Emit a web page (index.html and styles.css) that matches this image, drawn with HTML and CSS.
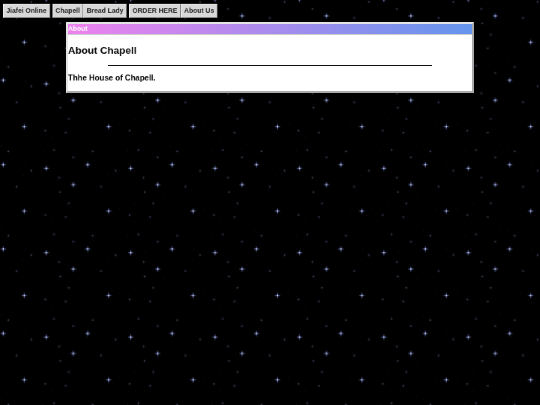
FILE: index.html
```html
<!DOCTYPE html>
<html lang="en">
<head>
<meta charset="utf-8">
<title>About Chapell</title>
<link rel="stylesheet" href="styles.css">
</head>
<body>
<svg class="sky" width="540" height="405" aria-hidden="true">
  <defs>
    <symbol id="big" overflow="visible"><circle class="halo" r="1.8"/><path class="ray" d="M-2.8 0H2.8M0-2.8V2.8"/><circle class="core" r=".8"/></symbol>
    <symbol id="mid" overflow="visible"><path class="ray-dim" d="M-1.4 0H1.4M0-1.4V1.4"/><circle class="core-dim" r=".4"/></symbol>
    <circle id="dot" class="dot" r=".35"/>
    <pattern id="stars" width="84.4" height="84.4" patternUnits="userSpaceOnUse">
      <use href="#big" x="73.3" y="15.9"/><use href="#big" x="24.3" y="42.3"/>
      <use href="#big" x="3.3" y="80.3"/><use href="#big" x="46.3" y="83.9"/>
      <use href="#big" x="46.3" y="-.5"/><use href="#big" x="3.3" y="-4.1"/>
      <use href="#mid" x="16.7" y="17.9"/><use href="#mid" x="60.3" y="23.3"/>
      <use href="#mid" x="68.7" y="34.6"/><use href="#mid" x="45.3" y="46.3"/>
      <use href="#mid" x="65.7" y="48.3"/><use href="#mid" x="8.3" y="66.9"/>
      <use href="#mid" x="54" y="65.6"/><use href="#mid" x="73.3" y="72.9"/>
      <use href="#mid" x="31.3" y="1.9"/><use href="#mid" x="59.3" y="8.9"/>
      <use href="#dot" x="13.3" y="40.6"/><use href="#dot" x="35.7" y="14.9"/>
      <use href="#dot" x="36.7" y="28.3"/><use href="#dot" x="50.7" y="34.9"/>
      <use href="#dot" x="51.7" y="53.3"/><use href="#dot" x="1.3" y="61.6"/>
      <use href="#dot" x="43.3" y="66.6"/><use href="#dot" x="61.3" y="83.3"/>
      <use href="#dot" x="25" y="80.6"/><use href="#dot" x="79.3" y="25.6"/>
      <use href="#dot" x="78.3" y="59.9"/><use href="#dot" x="23.3" y="6.5"/>
      <use href="#dot" x="35" y="39.9"/>
    </pattern>
  </defs>
  <rect width="540" height="405" fill="url(#stars)"/>
</svg>
<div class="page">
  <div class="nav-wrap">
    <nav class="nav">
      <div class="group"><a class="btn">Jiafei Online</a></div>
      <div class="group"><a class="btn">Chapell</a><a class="btn">Bread Lady</a></div>
      <div class="group"><a class="btn">ORDER HERE</a><a class="btn">About Us</a></div>
    </nav>
  </div>
  <main class="window">
    <div class="title"><div class="title-text">About</div></div>
    <div class="body">
      <h1>About Chapell</h1>
      <hr>
      <p>Thhe House of Chapell.</p>
    </div>
  </main>
</div>
</body>
</html>
```
FILE: styles.css
```css
* { box-sizing: border-box; }
html, body { margin: 0; height: 405px; overflow: hidden; }
body { background: #000; font-family: "Liberation Sans", Arial, sans-serif; color: #000; position: relative; }
.sky { position: absolute; left: 0; top: 0; }
.halo { fill: #39457f; opacity: .35; }
.ray { stroke: #6272b4; stroke-width: .55; fill: none; }
.core { fill: #dde4ff; }
.ray-dim { stroke: #30354f; stroke-width: .45; fill: none; }
.core-dim { fill: #6f7694; }
.dot { fill: #2c3044; }
.page { position: relative; width: 540px; }
.nav-wrap { height: 21.75px; }
.nav { display: flex; gap: 3px; padding: 4.5px 0 0 4px; width: 320px; transform: scale(.75); transform-origin: 0 0; will-change: transform; }
.group { display: flex; }
.btn { display: flex; align-items: center; height: 19px; padding: 0 3.5px; font-size: 9px; font-weight: bold; color: #222; background: #d8d8d8; border: 1px solid; border-color: #eee #777 #777 #eee; }
.window { width: 408px; margin-left: 66px; height: 71.25px; background: #fff; border: 2px solid; border-color: #e4e4e4 #aaa #aaa #e4e4e4; display: flex; flex-direction: column; }
.title { height: 11.25px; flex: none; background: linear-gradient(to right, violet, cornflowerblue); border-bottom: 1px solid #ccc; }
.title-text { width: 100px; font-size: 9px; line-height: 13px; font-weight: bold; color: #fff; transform: scale(.75); transform-origin: 0 0; will-change: transform; }
.body { flex: 1; }
h1 { width: 300px; margin: 9px 0 -4.5px; font-size: 13.5px; line-height: 18px; font-weight: bold; transform: scale(.75); transform-origin: 0 0; will-change: transform; }
hr { width: 324px; height: 1px; margin: 7.5px 0 0 40px; border: 0; background: #111; }
p { width: 300px; margin: 7.3px 0 0; font-size: 10.5px; line-height: 13px; font-weight: bold; transform: scale(.75); transform-origin: 0 0; will-change: transform; }
```
